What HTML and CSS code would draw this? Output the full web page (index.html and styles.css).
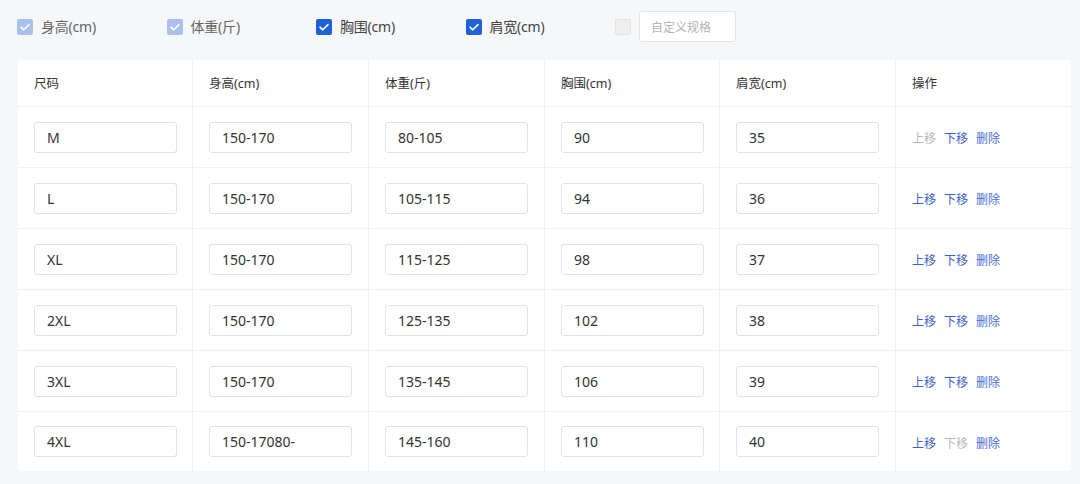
FILE: index.html
```html
<!DOCTYPE html>
<html lang="zh">
<head>
<meta charset="utf-8">
<link rel="stylesheet" href="styles.css">
</head>
<body>
<div class="specs">
  <label class="spec"><span class="cb cb-on cb-dis"><svg viewBox="0 0 16 16"><path d="M4 8.2l2.7 2.6L12 5.6"/></svg></span><span class="lbl">身高(cm)</span></label>
  <label class="spec"><span class="cb cb-on cb-dis"><svg viewBox="0 0 16 16"><path d="M4 8.2l2.7 2.6L12 5.6"/></svg></span><span class="lbl">体重(斤)</span></label>
  <label class="spec"><span class="cb cb-on"><svg viewBox="0 0 16 16"><path d="M4 8.2l2.7 2.6L12 5.6"/></svg></span><span class="lbl">胸围(cm)</span></label>
  <label class="spec"><span class="cb cb-on"><svg viewBox="0 0 16 16"><path d="M4 8.2l2.7 2.6L12 5.6"/></svg></span><span class="lbl">肩宽(cm)</span></label>
  <div class="spec spec-custom"><span class="cb cb-off"></span><span class="custom">自定义规格</span></div>
</div>

<div class="table">
  <div class="row head">
    <div class="cell">尺码</div><div class="cell">身高(cm)</div><div class="cell">体重(斤)</div><div class="cell">胸围(cm)</div><div class="cell">肩宽(cm)</div><div class="cell">操作</div>
  </div>
  <div class="row">
    <div class="cell"><span class="inp">M</span></div><div class="cell"><span class="inp">150-170</span></div><div class="cell"><span class="inp">80-105</span></div><div class="cell"><span class="inp">90</span></div><div class="cell"><span class="inp">35</span></div>
    <div class="cell ops"><span class="op dis">上移</span><span class="op">下移</span><span class="op del">删除</span></div>
  </div>
  <div class="row">
    <div class="cell"><span class="inp">L</span></div><div class="cell"><span class="inp">150-170</span></div><div class="cell"><span class="inp">105-115</span></div><div class="cell"><span class="inp">94</span></div><div class="cell"><span class="inp">36</span></div>
    <div class="cell ops"><span class="op">上移</span><span class="op">下移</span><span class="op del">删除</span></div>
  </div>
  <div class="row">
    <div class="cell"><span class="inp">XL</span></div><div class="cell"><span class="inp">150-170</span></div><div class="cell"><span class="inp">115-125</span></div><div class="cell"><span class="inp">98</span></div><div class="cell"><span class="inp">37</span></div>
    <div class="cell ops"><span class="op">上移</span><span class="op">下移</span><span class="op del">删除</span></div>
  </div>
  <div class="row">
    <div class="cell"><span class="inp">2XL</span></div><div class="cell"><span class="inp">150-170</span></div><div class="cell"><span class="inp">125-135</span></div><div class="cell"><span class="inp">102</span></div><div class="cell"><span class="inp">38</span></div>
    <div class="cell ops"><span class="op">上移</span><span class="op">下移</span><span class="op del">删除</span></div>
  </div>
  <div class="row">
    <div class="cell"><span class="inp">3XL</span></div><div class="cell"><span class="inp">150-170</span></div><div class="cell"><span class="inp">135-145</span></div><div class="cell"><span class="inp">106</span></div><div class="cell"><span class="inp">39</span></div>
    <div class="cell ops"><span class="op">上移</span><span class="op">下移</span><span class="op del">删除</span></div>
  </div>
  <div class="row last">
    <div class="cell"><span class="inp">4XL</span></div><div class="cell"><span class="inp">150-17080-</span></div><div class="cell"><span class="inp">145-160</span></div><div class="cell"><span class="inp">110</span></div><div class="cell"><span class="inp">40</span></div>
    <div class="cell ops"><span class="op">上移</span><span class="op dis">下移</span><span class="op del">删除</span></div>
  </div>
</div>
</body>
</html>
```

FILE: styles.css
```css
* { box-sizing: border-box; }
html, body { margin: 0; padding: 0; }
body {
  background: #f6f7f9;
  font-family: "Noto Sans", "Noto Sans CJK SC", sans-serif;
  color: #333;
  width: 1080px;
  height: 484px;
  overflow: hidden;
}
.specs {
  display: flex;
  align-items: center;
  height: 55px;
  padding-left: 17px;
  padding-bottom: 2px;
}
.spec {
  display: flex;
  align-items: center;
  width: 149.5px;
  flex: none;
}
.spec-custom { width: auto; }
.cb {
  width: 16px;
  height: 16px;
  border-radius: 2px;
  display: flex;
  align-items: center;
  justify-content: center;
  flex: none;
}
.cb svg { width: 16px; height: 16px; fill: none; stroke: #fff; stroke-width: 1.6; stroke-linecap: round; stroke-linejoin: round; }
.cb-on { background: #1e62d9; }
.cb-on.cb-dis { background: #a9c0ef; }
.cb-off { background: #eeeeee; border: 1px solid #e2e2e2; }
.lbl {
  margin-left: 8px;
  font-size: 14px;
  color: #444;
  line-height: 20px;
  letter-spacing: -0.2px;
}
.cb-dis + .lbl { color: #666; }
.custom {
  margin-left: 8px;
  width: 97px;
  height: 31px;
  border: 1px solid #e3e3e3;
  border-radius: 3px;
  background: #fff;
  font-size: 12px;
  color: #b3b3b3;
  padding-left: 11px;
  display: flex;
  align-items: center;
}
.table {
  margin-left: 18px;
  margin-top: 5px;
  width: 1053px;
  background: #fff;
  border-radius: 4px;
}
.row {
  display: grid;
  grid-template-columns: 175px 176px 176px 175px 176px 175px;
  height: 61px;
  border-bottom: 1px solid #f0f0f0;
}
.row.head { height: 47px; }
.row.last { border-bottom: none; height: 59px; }
.cell {
  display: flex;
  align-items: center;
  padding-left: 16px;
  border-right: 1px solid #f0f0f0;
  font-size: 12.5px;
  color: #333;
}
.cell:last-child { border-right: none; }
.head .cell { padding-bottom: 1px; }
.inp {
  width: 143px;
  height: 31px;
  border: 1px solid #e2e2e2;
  border-radius: 3px;
  padding-left: 12px;
  display: flex;
  align-items: center;
  font-size: 14px;
  color: #333;
}
.ops { gap: 8px; padding-top: 2px; }
.op {
  font-size: 12px;
  color: #3c5fc4;
}
.op.del { color: #4a6fd6; }
.op.dis { color: #b8b8b8; }
```
